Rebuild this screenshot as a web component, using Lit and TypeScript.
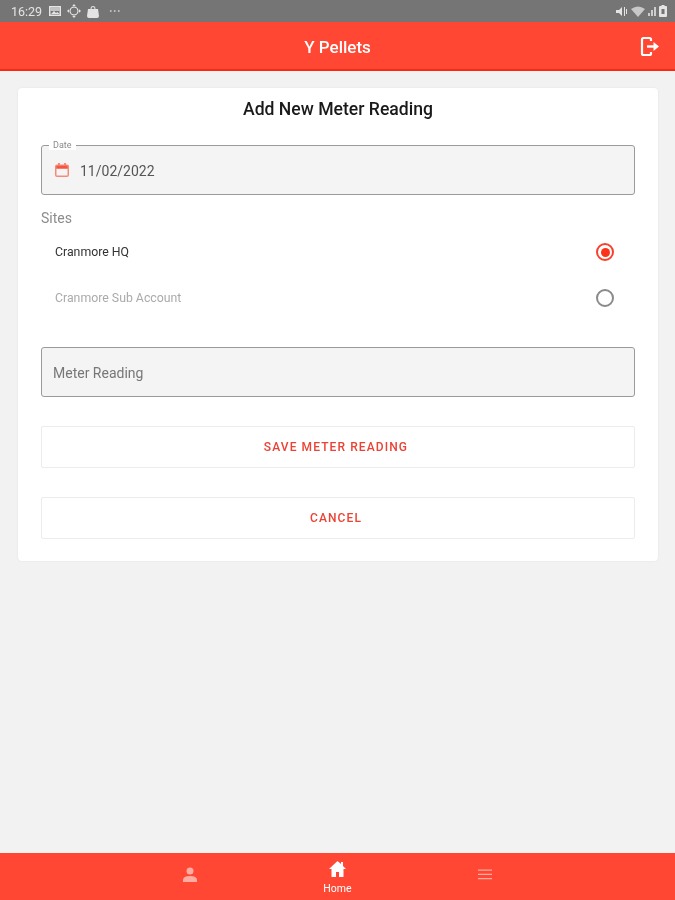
import { LitElement, html, css, svg } from "lit";
import { customElement } from "lit/decorators.js";

@customElement("app-root")
export class AppRoot extends LitElement {
  static styles = css`
    :host { display: block; font-family: Roboto, "Liberation Sans", sans-serif; }
    * { box-sizing: border-box; }
    .page { height: 900px; display: flex; flex-direction: column; background: #f2f2f2; overflow: hidden; filter: blur(.35px); }
    .status { height: 22px; flex: none; background: #757575; display: flex; align-items: center; padding: 0 8px 0 11px; color: #e4e4e4; font-size: 12.5px; }
    .status .time { margin-right: 7px; }
    .status .left { display: flex; align-items: center; gap: 6px; }
    .status .right { margin-left: auto; display: flex; align-items: center; gap: 3px; }
    .dots { margin-left: 4px; letter-spacing: 1px; font-size: 9px; color: #c4c4c4; }
    .toolbar { height: 49px; flex: none; background: #ff4733; border-bottom: 2px solid #f52b14; padding-top: 2px; display: flex; align-items: center; justify-content: center; position: relative; color: #fff; font-size: 17px; font-weight: 500; }
    .logout { position: absolute; right: 15px; top: 14px; width: 20px; height: 22px; }
    .main { flex: 1; padding: 17px 17px 0 18px; }
    .card { background: #fff; border-radius: 4px; padding: 9px 23px 22px; box-shadow: 0 0 2px rgba(0,0,0,.08); display: flex; flex-direction: column; }
    h1 { margin: 0; height: 24px; line-height: 24px; text-align: center; font-size: 17.6px; font-weight: 500; color: #1a1a1a; }
    .field { height: 50px; background: #f4f4f4; border: 1px solid #9a9a9a; border-radius: 3px; display: flex; align-items: center; position: relative; color: #555; font-size: 14px; padding-top: 2px; }
    .date { margin-top: 24px; padding-left: 13px; gap: 11px; }
    .date svg { margin-top: -2px; }
    .float { position: absolute; left: 7px; top: -6px; padding: 0 4px; background: #fff; color: #8a8a8a; font-size: 9px; line-height: 10px; }
    .sites { margin-top: 15px; height: 16px; line-height: 16px; color: #8c8c8c; font-size: 14px; }
    .row { height: 46px; display: flex; align-items: center; justify-content: space-between; padding: 0 21px 0 14px; font-size: 12.3px; color: #333; }
    .row.off { color: #aaa; }
    .rows { margin-top: 3px; }
    .radio { width: 18px; height: 18px; border-radius: 50%; border: 2px solid #8a8a8a; position: relative; }
    .radio.on { border-color: #f8412d; }
    .radio.on::after { content: ""; position: absolute; inset: 2.5px; border-radius: 50%; background: #fb3419; }
    .meter { margin-top: 26px; padding-left: 11px; color: #777; }
    .btn { height: 42px; border: 1px solid #ececec; border-radius: 2px; background: #fff; display: flex; align-items: center; justify-content: center; color: #ea4335; font-size: 12px; font-weight: 500; letter-spacing: 1.1px; padding-right: 4px; }
    .save { margin-top: 29px; }
    .cancel { margin-top: 29px; }
    .nav { height: 47px; flex: none; background: #ff4733; display: grid; grid-template-columns: 1fr 1fr 1fr; padding: 0 116px; }
    .tab { display: flex; flex-direction: column; align-items: center; padding-top: 8px; color: #fff; font-size: 10.5px; }
    .tab.dim { opacity: .55; padding-top: 14px; }
    .tab span { margin-top: 6px; line-height: 12px; }
  `;

  private ic(w: number, h: number, vb: string, body: unknown) {
    return html`<svg width=${w} height=${h} viewBox=${vb} fill="currentColor">${body}</svg>`;
  }

  render() {
    return html`<div class="page">
      <div class="status">
        <span class="time">16:29</span>
        <div class="left">
          ${this.ic(12, 11, "0 0 12 11", svg`<path fill-rule="evenodd" d="M0 0h12v10H0zM1.5 1.5v7h9v-7z"/><path d="M2 8l3-3 2 2 1.5-1 2 2z"/><rect x="1.5" y="1.5" width="9" height="3.5" opacity=".7"/>`)}
          ${this.ic(14, 14, "0 0 14 14", svg`<path d="M7 0l2 2.2H5zM7 14l-2-2.2h4zM0 7l2.2-2v4zM14 7l-2.2 2V5z"/><circle cx="7" cy="7" r="4" fill="none" stroke="currentColor"/>`)}
          ${this.ic(12, 13, "0 0 12 13", svg`<path d="M1 4h10l1 7q0 2-2 2H2q-2 0-2-2zM3.5 4q0-3 2.5-3t2.5 3h-1q0-2-1.500-2t-1.500 2z"/>`)}
          <span class="dots">•••</span>
        </div>
        <div class="right">
          ${this.ic(12, 11, "0 0 12 11", svg`<path d="M0 4h3l3-3v9L3 7H0zM8 1h1v9H8zM10 3h1v5h-1z"/>`)}
          ${this.ic(14, 11, "0 0 14 11", svg`<path d="M0 3q7-5 14 0l-7 8z" opacity=".75"/>`)}
          ${this.ic(8, 10, "0 0 8 10", svg`<path d="M0 7h2v3H0zM3 4h2v6H3zM6 1h2v9H6z" opacity=".8"/>`)}
          ${this.ic(8, 12, "0 0 8 12", svg`<path fill-rule="evenodd" d="M2.500 0h3v1H7q1 0 1 1v9q0 1-1 1H1q-1 0-1-1V2q0-1 1-1h1.500zM2.500 4v5h3V4z"/>`)}
        </div>
      </div>
      <div class="toolbar">
        Y Pellets
        <div class="logout">
          <svg width="20" height="22" viewBox="0 0 20 22" fill="none" stroke="#fff">
            <path stroke-width="2.2" stroke-linejoin="round" d="M11 5V3.500Q11 2 9.500 2H3.500Q2 2 2 3.500v14Q2 19 3.500 19h6q1.500 0 1.500-1.500V16"/>
            <path stroke-width="2.400" d="M7 10.500h8"/>
            <path fill="#fff" stroke="none" d="M13.500 6l5.500 4.500-5.500 4.500z"/>
          </svg>
        </div>
      </div>
      <div class="main">
        <div class="card">
          <h1>Add New Meter Reading</h1>
          <div class="field date">
            <span class="float">Date</span>
            <svg width="14" height="14" viewBox="0 0 14 14">
              <path fill="#f7897b" fill-rule="evenodd" d="M3 0h2v1.500h4V0h2v1.500h1q2 0 2 2V12q0 2-2 2H2q-2 0-2-2V3.500q0-2 2-2h1zM1.500 6v6q0 .5.500.5h10q.5 0 .5-.5V6z"/>
              <rect x="1.500" y="2.800" width="11" height="2.400" fill="#f6553f"/>
            </svg>
            <span>11/02/2022</span>
          </div>
          <div class="sites">Sites</div>
          <div class="rows">
            <div class="row"><span>Cranmore HQ</span><div class="radio on"></div></div>
            <div class="row off"><span>Cranmore Sub Account</span><div class="radio"></div></div>
          </div>
          <div class="field meter">Meter Reading</div>
          <div class="btn save">SAVE METER READING</div>
          <div class="btn cancel">CANCEL</div>
        </div>
      </div>
      <div class="nav">
        <div class="tab dim">
          <svg width="14" height="15" viewBox="0 0 14 15" fill="#fff"><circle cx="7" cy="4" r="3.500"/><path d="M0 15v-2q0-4 7-4t7 4v2z"/></svg>
        </div>
        <div class="tab">
          <svg width="17" height="16" viewBox="0 0 17 16" fill="#fff"><path fill-rule="evenodd" d="M8.500 0L12 3V1h2v4l3 3h-2.500v8H10v-5H7v5H2.500V8H0z"/></svg>
          <span>Home</span>
        </div>
        <div class="tab dim">
          <svg width="14" height="15" viewBox="0 0 14 15" fill="#fff"><path d="M0 2.500h14v1.300H0zM0 6.800h14v1.300H0zM0 11h14v1.300H0z"/></svg>
        </div>
      </div>
    </div>`;
  }
}
